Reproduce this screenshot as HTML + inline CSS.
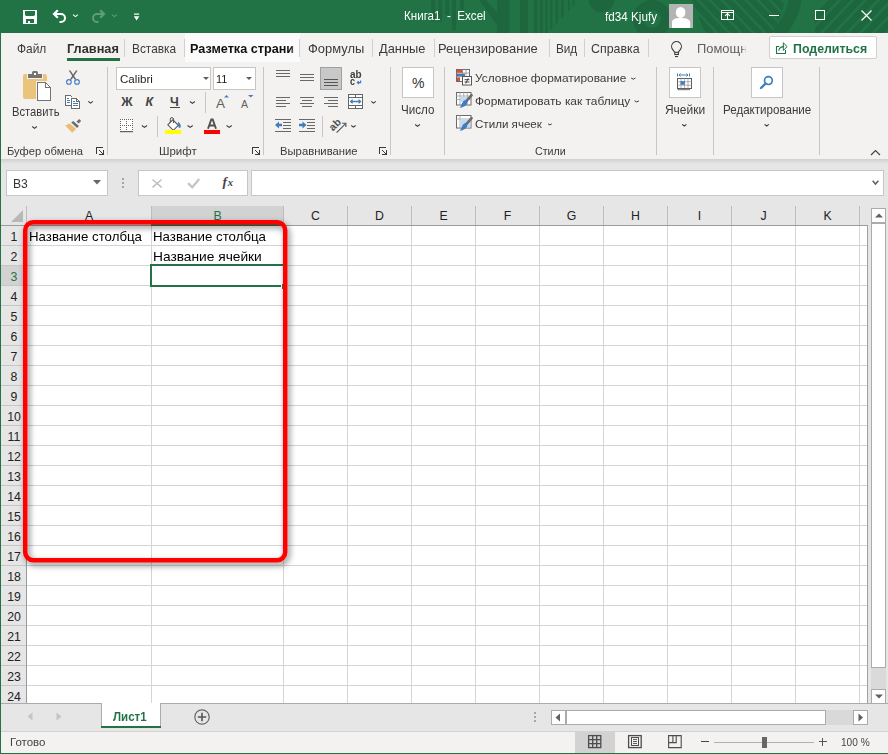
<!DOCTYPE html>
<html><head><meta charset="utf-8"><style>
html,body{margin:0;padding:0}
body{width:888px;height:754px;overflow:hidden;position:relative;font-family:"Liberation Sans",sans-serif;background:#f3f2f1}
.t{position:absolute;white-space:nowrap}
svg{display:block}
</style></head><body>
<div style="position:absolute;left:0px;top:0px;width:888px;height:33px;background:#217346"></div>
<svg style="position:absolute;left:420px;top:0px;" width="468" height="33" viewBox="0 0 468 33">
<defs>
<clipPath id="c1"><path d="M99 0H159L127.6 33H99z"/></clipPath>
<clipPath id="c2"><path d="M272 0H365C362 12 358 24 352 33H285z"/></clipPath>
<clipPath id="c3"><path d="M395 0H468V33H395z"/></clipPath>
</defs>
<g fill="#1d663e">
<rect x="11.2" y="0" width="3.9" height="21.4"/>
<rect x="18.5" y="0" width="3.4" height="21.4"/>
<rect x="25.3" y="0" width="3.9" height="14.6"/>
<rect x="32" y="0" width="4" height="30.4"/>
<rect x="40" y="0" width="3.9" height="10"/>
<path d="M59 0H66L77 13V0H89.5V33H77V25z"/>
<g clip-path="url(#c1)"><rect x="100" y="0" width="8" height="33"/><rect x="114" y="0" width="3.4" height="33"/><rect x="119.7" y="0" width="3.3" height="33"/><rect x="125.3" y="0" width="2.3" height="33"/><rect x="130" y="0" width="2.5" height="33"/><rect x="135.5" y="0" width="2.9" height="33"/><rect x="141" y="0" width="2.8" height="33"/><rect x="147.8" y="0" width="2.2" height="33"/><rect x="152.3" y="0" width="2.3" height="33"/></g>
<circle cx="181.5" cy="-1" r="13"/>
</g>
<circle cx="232" cy="19" r="14" fill="none" stroke="#1d663e" stroke-width="10"/>
<g stroke="#1d663e" stroke-width="6" clip-path="url(#c2)"><path d="M222 -2 L257 35"/><path d="M234 -2 L269 35"/><path d="M246 -2 L281 35"/><path d="M258 -2 L293 35"/><path d="M270 -2 L305 35"/><path d="M282 -2 L317 35"/><path d="M294 -2 L329 35"/><path d="M306 -2 L341 35"/><path d="M318 -2 L353 35"/><path d="M330 -2 L365 35"/><path d="M342 -2 L377 35"/><path d="M354 -2 L389 35"/></g>
<path d="M358 35 C368 22 375 10 375 -2" fill="none" stroke="#1d663e" stroke-width="13"/>
<g stroke="#1d663e" stroke-width="6.5" clip-path="url(#c3)"><path d="M380 35 L415 -2"/><path d="M393 35 L428 -2"/><path d="M406 35 L441 -2"/><path d="M419 35 L454 -2"/><path d="M432 35 L467 -2"/><path d="M445 35 L480 -2"/><path d="M458 35 L493 -2"/><path d="M471 35 L506 -2"/></g>
</svg>
<svg style="position:absolute;left:0;top:0" width="888" height="754"><g fill="#fff"><rect x="23" y="10" width="14" height="1"/><rect x="23" y="11" width="2" height="12"/><rect x="35" y="11" width="2" height="12"/><rect x="23" y="16" width="14" height="3"/><rect x="25" y="19" width="1" height="4"/><rect x="34" y="19" width="1" height="4"/><rect x="28" y="21" width="2" height="2"/><rect x="23" y="23" width="14" height="1"/><rect x="25" y="15" width="1" height="1" opacity="0.6"/><rect x="34" y="15" width="1" height="1" opacity="0.6"/></g></svg>
<svg style="position:absolute;left:0;top:0" width="888" height="754"><path d="M54 14H61A4 4 0 0 1 61 22H59.5" fill="none" stroke="#fff" stroke-width="2"/><path d="M57.8 10.2L54 14L57.8 17.8" fill="none" stroke="#fff" stroke-width="2.2"/></svg>
<svg style="position:absolute;left:0;top:0" width="888" height="754"><path d="M73 14.6L75.45 16.6L77.9 14.6" fill="none" stroke="#fff" stroke-width="1.1"/></svg>
<svg style="position:absolute;left:0;top:0" width="888" height="754"><path d="M104 14H97A4 4 0 0 0 97 22H98.5" fill="none" stroke="#5f9c79" stroke-width="2"/><path d="M100.2 10.2L104 14L100.2 17.8" fill="none" stroke="#5f9c79" stroke-width="2.2"/></svg>
<svg style="position:absolute;left:0;top:0" width="888" height="754"><path d="M111.9 14.6L114.4 16.6L116.9 14.6" fill="none" stroke="#5f9c79" stroke-width="1.1"/></svg>
<svg style="position:absolute;left:0;top:0" width="888" height="754"><rect x="134" y="13.5" width="5.2" height="1.2" fill="#fff"/><path d="M133.8 16.3h5.6l-2.8 4.2z" fill="#fff"/></svg>
<div class="t" style="left:403.60px;top:9.76px;font-size:12.1px;line-height:12.1px;color:#fff;font-weight:400;transform:scaleX(0.9594);transform-origin:0 0;">Книга1&nbsp; -&nbsp; Excel</div>
<div class="t" style="left:605.10px;top:11.36px;font-size:12.1px;line-height:12.1px;color:#fff;font-weight:400;transform:scaleX(0.9664);transform-origin:0 0;">fd34 Kjufy</div>
<div style="position:absolute;left:669px;top:4px;width:24px;height:24px;background:#b4b4b4"></div>
<svg style="position:absolute;left:0;top:0" width="888" height="754"><ellipse cx="680.6" cy="12.4" rx="4.8" ry="5.5" fill="#fff"/><path d="M672 28V22.3C672 19.3 675 17.9 680.6 17.9S690.2 19.3 690.2 22.3V28z" fill="#fff"/></svg>
<svg style="position:absolute;left:0;top:0" width="888" height="754"><g fill="#fff"><rect x="721" y="10" width="13" height="1"/><rect x="721" y="19" width="13" height="1"/><rect x="721" y="10" width="1" height="10"/><rect x="733" y="10" width="1" height="10"/><rect x="721" y="12" width="13" height="1"/><rect x="727" y="13" width="1" height="6"/></g><path d="M725.1 15.9L727.5 13.5L729.9 15.9" fill="none" stroke="#fff" stroke-width="1.1"/></svg>
<div style="position:absolute;left:769px;top:15px;width:10px;height:1px;background:#fff"></div>
<div style="position:absolute;left:815px;top:10px;width:10px;height:10px;border:1px solid #fff;box-sizing:border-box"></div>
<svg style="position:absolute;left:861px;top:10px;" width="11" height="11" viewBox="0 0 11 11"><path d="M0.5 0.5l10 10M10.5 0.5l-10 10" stroke="#fff" stroke-width="1.2"/></svg>
<div style="position:absolute;left:0px;top:33px;width:888px;height:130px;background:#f3f2f1"></div>
<div style="position:absolute;left:185px;top:33px;width:115px;height:29px;background:#fbfbfb"></div>
<div class="t" style="left:16.70px;top:41.83px;font-size:13.2px;line-height:13.2px;color:#3b3a39;font-weight:400;transform:scaleX(0.9046);transform-origin:0 0;">Файл</div>
<div class="t" style="left:67.40px;top:41.83px;font-size:13.2px;line-height:13.2px;color:#323130;font-weight:700;transform:scaleX(0.9672);transform-origin:0 0;">Главная</div>
<div style="position:absolute;left:67px;top:58px;width:53px;height:3px;background:#217346"></div>
<div class="t" style="left:131.60px;top:41.83px;font-size:13.2px;line-height:13.2px;color:#3b3a39;font-weight:400;transform:scaleX(0.8997);transform-origin:0 0;">Вставка</div>
<div class="t" style="left:189.50px;top:41.83px;font-size:13.2px;line-height:13.2px;color:#111;font-weight:700;transform:scaleX(0.9588);transform-origin:0 0;">Разметка страни</div>
<div style="position:absolute;left:291px;top:40px;width:6px;height:16px;background:linear-gradient(90deg,rgba(251,251,251,0),rgba(251,251,251,0.85) 80%)"></div>
<div class="t" style="left:307.70px;top:41.83px;font-size:13.2px;line-height:13.2px;color:#3b3a39;font-weight:400;transform:scaleX(0.9805);transform-origin:0 0;">Формулы</div>
<div class="t" style="left:379.30px;top:41.83px;font-size:13.2px;line-height:13.2px;color:#3b3a39;font-weight:400;transform:scaleX(0.9723);transform-origin:0 0;">Данные</div>
<div class="t" style="left:438.02px;top:41.83px;font-size:13.2px;line-height:13.2px;color:#3b3a39;font-weight:400;transform:scaleX(0.9802);transform-origin:0 0;">Рецензирование</div>
<div class="t" style="left:555.51px;top:41.83px;font-size:13.2px;line-height:13.2px;color:#3b3a39;font-weight:400;transform:scaleX(0.8894);transform-origin:0 0;">Вид</div>
<div class="t" style="left:591.00px;top:41.83px;font-size:13.2px;line-height:13.2px;color:#3b3a39;font-weight:400;transform:scaleX(0.9409);transform-origin:0 0;">Справка</div>
<div style="position:absolute;left:124px;top:39px;width:1px;height:18px;background:#d2d0ce"></div>
<div style="position:absolute;left:184px;top:39px;width:1px;height:18px;background:#d2d0ce"></div>
<div style="position:absolute;left:299px;top:39px;width:1px;height:18px;background:#d2d0ce"></div>
<div style="position:absolute;left:372px;top:39px;width:1px;height:18px;background:#d2d0ce"></div>
<div style="position:absolute;left:434px;top:39px;width:1px;height:18px;background:#d2d0ce"></div>
<div style="position:absolute;left:549px;top:39px;width:1px;height:18px;background:#d2d0ce"></div>
<div style="position:absolute;left:584px;top:39px;width:1px;height:18px;background:#d2d0ce"></div>
<div style="position:absolute;left:648px;top:39px;width:1px;height:18px;background:#d2d0ce"></div>
<svg style="position:absolute;left:0;top:0" width="888" height="754"><path d="M674.3 52.2V51.8L672.7 49.6A4.9 4.9 0 1 1 680.3 49.6L678.7 51.8V52.2" fill="none" stroke="#3c3c3c" stroke-width="1.1"/><rect x="674.8" y="52.3" width="3.6" height="2.2" fill="none" stroke="#3c3c3c" stroke-width="1.1"/><rect x="675" y="56" width="3" height="1.1" fill="#3c3c3c"/></svg>
<div class="t" style="left:697.02px;top:41.83px;font-size:13.2px;line-height:13.2px;color:#605e5c;font-weight:400;transform:scaleX(0.9788);transform-origin:0 0;">Помощн</div>
<div style="position:absolute;left:741px;top:40px;width:8px;height:16px;background:linear-gradient(90deg,rgba(243,242,241,0),#f3f2f1 70%)"></div>
<div style="position:absolute;left:769px;top:36px;width:108px;height:23px;background:#fff;border:1px solid #d2d0ce;border-radius:2px;box-sizing:border-box"></div>
<svg style="position:absolute;left:0;top:0" width="888" height="754"><path d="M779.2 46.5H776.5V53.5H785.5V50" fill="none" stroke="#217346" stroke-width="1.1"/><path d="M778.8 50.8C779 47.8 781 46.6 784.2 46.6" fill="none" stroke="#217346" stroke-width="1.1"/><path d="M783.3 42.8L787.2 46.6L783.3 50.4z" fill="none" stroke="#217346" stroke-width="1.0" stroke-linejoin="round"/></svg>
<div class="t" style="left:793.00px;top:41.91px;font-size:13.1px;line-height:13.1px;color:#217346;font-weight:700;transform:scaleX(0.9443);transform-origin:0 0;">Поделиться</div>
<div style="position:absolute;left:107px;top:67px;width:1px;height:88px;background:#c8c6c4"></div>
<div style="position:absolute;left:263px;top:67px;width:1px;height:88px;background:#c8c6c4"></div>
<div style="position:absolute;left:390px;top:67px;width:1px;height:88px;background:#c8c6c4"></div>
<div style="position:absolute;left:444px;top:67px;width:1px;height:88px;background:#c8c6c4"></div>
<div style="position:absolute;left:656px;top:67px;width:1px;height:88px;background:#c8c6c4"></div>
<div style="position:absolute;left:713px;top:67px;width:1px;height:88px;background:#c8c6c4"></div>
<div style="position:absolute;left:819px;top:67px;width:1px;height:88px;background:#c8c6c4"></div>
<div class="t" style="left:7.30px;top:146.03px;font-size:10.6px;line-height:10.6px;color:#3b3a39;font-weight:400;transform:scaleX(1.0570);transform-origin:0 0;">Буфер обмена</div>
<div class="t" style="left:158.80px;top:146.03px;font-size:10.6px;line-height:10.6px;color:#3b3a39;font-weight:400;transform:scaleX(1.0799);transform-origin:0 0;">Шрифт</div>
<div class="t" style="left:279.50px;top:146.03px;font-size:10.6px;line-height:10.6px;color:#3b3a39;font-weight:400;transform:scaleX(1.0640);transform-origin:0 0;">Выравнивание</div>
<div class="t" style="left:534.50px;top:146.03px;font-size:10.6px;line-height:10.6px;color:#3b3a39;font-weight:400;transform:scaleX(1.0065);transform-origin:0 0;">Стили</div>
<svg style="position:absolute;left:0;top:0" width="888" height="754"><g fill="#3a3a3a"><rect x="96" y="147" width="7" height="1"/><rect x="96" y="147" width="1" height="7"/><rect x="99" y="150" width="1" height="1"/><rect x="100" y="151" width="1" height="1"/><rect x="101" y="152" width="1" height="1"/><rect x="102" y="153" width="1" height="1"/><rect x="103" y="154" width="1" height="1"/><rect x="103" y="150" width="1" height="5"/><rect x="99" y="154" width="5" height="1"/></g></svg>
<svg style="position:absolute;left:0;top:0" width="888" height="754"><g fill="#3a3a3a"><rect x="252" y="147" width="7" height="1"/><rect x="252" y="147" width="1" height="7"/><rect x="255" y="150" width="1" height="1"/><rect x="256" y="151" width="1" height="1"/><rect x="257" y="152" width="1" height="1"/><rect x="258" y="153" width="1" height="1"/><rect x="259" y="154" width="1" height="1"/><rect x="259" y="150" width="1" height="5"/><rect x="255" y="154" width="5" height="1"/></g></svg>
<svg style="position:absolute;left:0;top:0" width="888" height="754"><g fill="#3a3a3a"><rect x="379" y="147" width="7" height="1"/><rect x="379" y="147" width="1" height="7"/><rect x="382" y="150" width="1" height="1"/><rect x="383" y="151" width="1" height="1"/><rect x="384" y="152" width="1" height="1"/><rect x="385" y="153" width="1" height="1"/><rect x="386" y="154" width="1" height="1"/><rect x="386" y="150" width="1" height="5"/><rect x="382" y="154" width="5" height="1"/></g></svg>
<svg style="position:absolute;left:870px;top:149px;" width="11" height="7" viewBox="0 0 11 7"><path d="M1 6l4.5-4.5L10 6" fill="none" stroke="#444" stroke-width="1.2"/></svg>
<svg style="position:absolute;left:0;top:0" width="888" height="754">
<rect x="23" y="74" width="24" height="25" rx="2" fill="#ebc47c"/>
<rect x="27" y="74" width="16" height="5" fill="#f3f2f1"/>
<rect x="28" y="74" width="14" height="4" fill="#737373"/>
<rect x="32" y="71" width="6" height="4" rx="1.5" fill="#737373"/>
<rect x="34" y="73" width="2" height="2" fill="#fff"/>
<rect x="36" y="81" width="16" height="21" fill="#f3f2f1"/>
<path d="M37 82H45L51 88V101H37z" fill="#fff"/>
<g fill="#737373">
<rect x="37" y="82" width="9" height="1"/><rect x="37" y="82" width="1" height="19"/><rect x="37" y="100" width="14" height="1"/><rect x="50" y="87" width="1" height="14"/>
<rect x="45" y="82" width="1" height="6"/><rect x="45" y="87" width="6" height="1"/>
</g>
<path d="M45.5 82.5L50.5 87.5" stroke="#737373" stroke-width="1"/>
</svg>
<div class="t" style="left:11.80px;top:105.76px;font-size:12.1px;line-height:12.1px;color:#3b3a39;font-weight:400;transform:scaleX(0.9262);transform-origin:0 0;">Вставить</div>
<svg style="position:absolute;left:0;top:0" width="888" height="754"><path d="M32.25 126.55L34.55 128.35L36.85 126.55" fill="none" stroke="#3b3a39" stroke-width="1.1"/></svg>
<svg style="position:absolute;left:0;top:0" width="888" height="754">
<path d="M68.7 70.6L70.4 70.6L76.3 79.2L74.8 79.8z" fill="#666"/><path d="M77.6 70.6L75.9 70.6L70 79.2L71.5 79.8z" fill="#666"/>
<circle cx="68.9" cy="81.9" r="2.3" fill="none" stroke="#3f7cc0" stroke-width="1.1"/>
<circle cx="77" cy="81.9" r="2.3" fill="none" stroke="#3f7cc0" stroke-width="1.1"/>
<rect x="65" y="95" width="6" height="11" fill="#fff"/><rect x="71" y="98" width="8" height="11" fill="#fff"/>
<g fill="#6b6b6b">
<rect x="65" y="95" width="6" height="1"/><rect x="65" y="95" width="1" height="11"/><rect x="65" y="105" width="6" height="1"/>
<rect x="71" y="96" width="1" height="1"/>
<rect x="71" y="98" width="6" height="1"/><rect x="71" y="98" width="1" height="11"/><rect x="71" y="108" width="9" height="1"/><rect x="79" y="101" width="1" height="8"/>
<rect x="76" y="98" width="1" height="4"/><rect x="76" y="101" width="4" height="1"/>
</g>
<path d="M76.5 98.5L79.5 101.5" stroke="#6b6b6b" stroke-width="1"/>
<g fill="#3f7cc0">
<rect x="67" y="98" width="2" height="1"/><rect x="67" y="100" width="3" height="1"/><rect x="67" y="102" width="3" height="1"/>
<rect x="73" y="101" width="2" height="1"/><rect x="73" y="103" width="5" height="1"/><rect x="73" y="105" width="5" height="1"/>
</g>
<path d="M79.2 119L81.2 120.9L78.5 123.6L76.5 121.6z" fill="#6e6e6e"/>
<path d="M73.2 121L79 126.1L77 127.9L71.2 122.6z" fill="#6e6e6e"/>
<path d="M65.2 125.4L69.8 123.5L76.2 128.9L72.2 132.8z" fill="#e8bf77"/>
</svg>
<svg style="position:absolute;left:0;top:0" width="888" height="754"><path d="M88.25 101.35L90.55000000000001 103.15L92.85000000000001 101.35" fill="none" stroke="#3b3a39" stroke-width="1.1"/></svg>
<div style="position:absolute;left:116px;top:67px;width:95px;height:23px;background:#fff;border:1px solid #c8c6c4;box-sizing:border-box"></div>
<div class="t" style="left:119.70px;top:74.27px;font-size:11.5px;line-height:11.5px;color:#201f1e;font-weight:400;transform:scaleX(1.0082);transform-origin:0 0;">Calibri</div>
<svg style="position:absolute;left:202.5px;top:77px;" width="7" height="4" viewBox="0 0 7 4"><path d="M0 0h6L3 3z" fill="#605e5c"/></svg>
<div style="position:absolute;left:213px;top:67px;width:43px;height:23px;background:#fff;border:1px solid #c8c6c4;box-sizing:border-box"></div>
<div class="t" style="left:216.00px;top:74.27px;font-size:11.5px;line-height:11.5px;color:#201f1e;font-weight:400;transform:scaleX(0.9530);transform-origin:0 0;">11</div>
<svg style="position:absolute;left:245.5px;top:77px;" width="7" height="4" viewBox="0 0 7 4"><path d="M0 0h6L3 3z" fill="#605e5c"/></svg>
<div class="t" style="left:121.20px;top:95.92px;font-size:12.5px;line-height:12.5px;color:#444;font-weight:700;">Ж</div>
<div class="t" style="left:145.50px;top:95.92px;font-size:12.5px;line-height:12.5px;color:#444;font-weight:700;font-style:italic">К</div>
<div class="t" style="left:170.00px;top:95.92px;font-size:12.5px;line-height:12.5px;color:#444;font-weight:700;">Ч</div>
<div style="position:absolute;left:170px;top:107px;width:10px;height:1px;background:#444"></div>
<svg style="position:absolute;left:0;top:0" width="888" height="754"><path d="M189.95000000000002 101.55L192.4 103.35000000000001L194.85 101.55" fill="none" stroke="#3b3a39" stroke-width="1.1"/></svg>
<div style="position:absolute;left:205px;top:92px;width:1px;height:21px;background:#c8c6c4"></div>
<div class="t" style="left:216.00px;top:97.37px;font-size:13.5px;line-height:13.5px;color:#605e5c;font-weight:400;">A</div>
<svg style="position:absolute;left:224px;top:95px;" width="5" height="3" viewBox="0 0 5 3"><path d="M0 2.5L2.5 0 5 2.5z" fill="#4a7fbf"/></svg>
<div class="t" style="left:241.00px;top:98.91px;font-size:10.5px;line-height:10.5px;color:#605e5c;font-weight:400;">A</div>
<svg style="position:absolute;left:248px;top:95px;" width="6" height="3" viewBox="0 0 6 3"><path d="M0 0h5.5L2.75 2.5z" fill="#4a7fbf"/></svg>
<svg style="position:absolute;left:0;top:0" width="888" height="754"><rect x="120" y="119" width="13" height="13" fill="#fff"/><g fill="#606060"><rect x="120" y="119" width="1" height="1"/><rect x="122" y="119" width="1" height="1"/><rect x="124" y="119" width="1" height="1"/><rect x="126" y="119" width="1" height="1"/><rect x="128" y="119" width="1" height="1"/><rect x="130" y="119" width="1" height="1"/><rect x="132" y="119" width="1" height="1"/><rect x="120" y="121" width="1" height="1"/><rect x="126" y="121" width="1" height="1"/><rect x="132" y="121" width="1" height="1"/><rect x="120" y="123" width="1" height="1"/><rect x="126" y="123" width="1" height="1"/><rect x="132" y="123" width="1" height="1"/><rect x="120" y="125" width="1" height="1"/><rect x="122" y="125" width="1" height="1"/><rect x="124" y="125" width="1" height="1"/><rect x="126" y="125" width="1" height="1"/><rect x="128" y="125" width="1" height="1"/><rect x="130" y="125" width="1" height="1"/><rect x="132" y="125" width="1" height="1"/><rect x="120" y="127" width="1" height="1"/><rect x="126" y="127" width="1" height="1"/><rect x="132" y="127" width="1" height="1"/><rect x="120" y="129" width="1" height="1"/><rect x="126" y="129" width="1" height="1"/><rect x="132" y="129" width="1" height="1"/></g><rect x="120" y="131" width="13" height="1.2" fill="#606060"/></svg>
<svg style="position:absolute;left:0;top:0" width="888" height="754"><path d="M141.85000000000002 125.55L144.45 127.35000000000001L147.04999999999998 125.55" fill="none" stroke="#3b3a39" stroke-width="1.1"/></svg>
<div style="position:absolute;left:157px;top:116px;width:1px;height:21px;background:#c8c6c4"></div>
<svg style="position:absolute;left:0;top:0" width="888" height="754">
<path d="M167.8 124.8L172.8 119.8L178.3 125.3L173.3 130.3z" fill="#fff" stroke="#555" stroke-width="1.1"/>
<path d="M170.3 122.3V119.2a1.6 1.6 0 0 1 3.2 0V123" fill="none" stroke="#555" stroke-width="1"/>
<path d="M177.8 121.8c1.8 1 3 2.6 3 4.4 0 1-.6 1.6-1.3 1.6s-1.2-.6-1.2-1.5z" fill="#3f7cc0"/>
<rect x="165" y="130" width="16.2" height="4" fill="#ffff00"/>
</svg>
<svg style="position:absolute;left:0;top:0" width="888" height="754"><path d="M187.55 125.55L190.15 127.35000000000001L192.75 125.55" fill="none" stroke="#3b3a39" stroke-width="1.1"/></svg>
<svg style="position:absolute;left:204px;top:118px;" width="16" height="17" viewBox="0 0 16 17"><path d="M4 10.8L7.3 1.5h1.4L12 10.8M5.5 7.5h5" fill="none" stroke="#505050" stroke-width="1.9"/><rect x="0" y="12" width="16" height="4" fill="#ff0000"/></svg>
<svg style="position:absolute;left:0;top:0" width="888" height="754"><path d="M226.55 125.55L229.15 127.35000000000001L231.75 125.55" fill="none" stroke="#3b3a39" stroke-width="1.1"/></svg>
<div style="position:absolute;left:276px;top:70px;width:14px;height:1px;background:#686868"></div>
<div style="position:absolute;left:276px;top:73px;width:14px;height:1px;background:#686868"></div>
<div style="position:absolute;left:276px;top:76px;width:14px;height:1px;background:#686868"></div>
<div style="position:absolute;left:300px;top:74px;width:14px;height:1px;background:#686868"></div>
<div style="position:absolute;left:300px;top:77px;width:14px;height:1px;background:#686868"></div>
<div style="position:absolute;left:300px;top:80px;width:14px;height:1px;background:#686868"></div>
<div style="position:absolute;left:320px;top:67px;width:22px;height:23px;background:#c8c8c8;border:1px solid #a0a0a0;box-sizing:border-box"></div>
<div style="position:absolute;left:324px;top:79px;width:14px;height:1px;background:#555"></div>
<div style="position:absolute;left:324px;top:82px;width:14px;height:1px;background:#555"></div>
<div style="position:absolute;left:324px;top:85px;width:14px;height:1px;background:#555"></div>
<div style="position:absolute;left:276px;top:97px;width:14px;height:1px;background:#686868"></div>
<div style="position:absolute;left:300px;top:97px;width:14px;height:1px;background:#686868"></div>
<div style="position:absolute;left:324px;top:97px;width:14px;height:1px;background:#686868"></div>
<div style="position:absolute;left:276px;top:100px;width:10px;height:1px;background:#686868"></div>
<div style="position:absolute;left:302px;top:100px;width:10px;height:1px;background:#686868"></div>
<div style="position:absolute;left:328px;top:100px;width:10px;height:1px;background:#686868"></div>
<div style="position:absolute;left:276px;top:103px;width:14px;height:1px;background:#686868"></div>
<div style="position:absolute;left:300px;top:103px;width:14px;height:1px;background:#686868"></div>
<div style="position:absolute;left:324px;top:103px;width:14px;height:1px;background:#686868"></div>
<div style="position:absolute;left:276px;top:106px;width:10px;height:1px;background:#686868"></div>
<div style="position:absolute;left:302px;top:106px;width:10px;height:1px;background:#686868"></div>
<div style="position:absolute;left:328px;top:106px;width:10px;height:1px;background:#686868"></div>
<div class="t" style="left:349.80px;top:68.69px;font-size:11px;line-height:11px;color:#404040;font-weight:700;transform:scaleX(0.9072);transform-origin:0 0;">ab</div>
<div class="t" style="left:350.10px;top:75.69px;font-size:11px;line-height:11px;color:#404040;font-weight:700;transform:scaleX(0.8167);transform-origin:0 0;">c</div>
<svg style="position:absolute;left:0;top:0" width="888" height="754"><path d="M360.6 80.4V82.6H357.6M358.9 81.1L357.3 82.6L358.9 84.1" fill="none" stroke="#3f7cc0" stroke-width="1.2"/></svg>
<svg style="position:absolute;left:0;top:0" width="888" height="754"><rect x="348" y="94" width="15" height="15" fill="#fff"/><g fill="#666"><rect x="348" y="94" width="15" height="1"/><rect x="348" y="108" width="15" height="1"/><rect x="348" y="94" width="1" height="15"/><rect x="362" y="94" width="1" height="15"/><rect x="348" y="97" width="15" height="1"/><rect x="348" y="105" width="15" height="1"/><rect x="355" y="94" width="1" height="4"/><rect x="355" y="105" width="1" height="4"/></g><path d="M351.5 101.5H359.7M352.6 99.6L350.6 101.5L352.6 103.4M358.6 99.6L360.6 101.5L358.6 103.4" fill="none" stroke="#3f7cc0" stroke-width="1.3"/></svg>
<svg style="position:absolute;left:0;top:0" width="888" height="754"><path d="M371.25 101.35L373.5 103.15L375.75 101.35" fill="none" stroke="#3b3a39" stroke-width="1.1"/></svg>
<div style="position:absolute;left:275px;top:119px;width:16px;height:1px;background:#686868"></div>
<div style="position:absolute;left:275px;top:131px;width:16px;height:1px;background:#686868"></div>
<div style="position:absolute;left:283px;top:122px;width:8px;height:1px;background:#686868"></div>
<div style="position:absolute;left:283px;top:125px;width:8px;height:1px;background:#686868"></div>
<div style="position:absolute;left:283px;top:128px;width:8px;height:1px;background:#686868"></div>
<div style="position:absolute;left:299px;top:119px;width:16px;height:1px;background:#686868"></div>
<div style="position:absolute;left:299px;top:131px;width:16px;height:1px;background:#686868"></div>
<div style="position:absolute;left:307px;top:122px;width:8px;height:1px;background:#686868"></div>
<div style="position:absolute;left:307px;top:125px;width:8px;height:1px;background:#686868"></div>
<div style="position:absolute;left:307px;top:128px;width:8px;height:1px;background:#686868"></div>
<svg style="position:absolute;left:275px;top:121px;" width="8" height="8" viewBox="0 0 8 8"><path d="M0 4L4 0.5V2.8H7V5.2H4V7.5z" fill="#3f7cc0"/></svg>
<svg style="position:absolute;left:299px;top:121px;" width="8" height="8" viewBox="0 0 8 8"><path d="M7.5 4L3.5 0.5V2.8H0V5.2H3.5V7.5z" fill="#3f7cc0"/></svg>
<div style="position:absolute;left:322px;top:116px;width:1px;height:21px;background:#c8c6c4"></div>
<svg style="position:absolute;left:0;top:0" width="888" height="754"><text x="333" y="131.5" font-size="10.5" font-weight="700" fill="#505050" font-family="Liberation Sans" transform="rotate(-45 333 131.5)">ab</text><path d="M336.6 132.6L345.4 123.8" stroke="#505050" stroke-width="1.1"/><path d="M342.2 123.3H345.9V127" fill="none" stroke="#505050" stroke-width="1.1"/></svg>
<svg style="position:absolute;left:0;top:0" width="888" height="754"><path d="M351.25 125.45L353.45 127.15L355.65 125.45" fill="none" stroke="#3b3a39" stroke-width="1.1"/></svg>
<div style="position:absolute;left:402px;top:67px;width:32px;height:31px;background:#fff;border:1px solid #c8c6c4;box-sizing:border-box"></div>
<div class="t" style="left:412.00px;top:76.15px;font-size:14px;line-height:14px;color:#333;font-weight:400;">%</div>
<div class="t" style="left:401.00px;top:103.76px;font-size:12.1px;line-height:12.1px;color:#3b3a39;font-weight:400;transform:scaleX(0.9585);transform-origin:0 0;">Число</div>
<svg style="position:absolute;left:0;top:0" width="888" height="754"><path d="M415.15000000000003 124.55L417.5 126.35000000000001L419.84999999999997 124.55" fill="none" stroke="#3b3a39" stroke-width="1.1"/></svg>
<svg style="position:absolute;left:0;top:0" width="888" height="754">
<rect x="456.5" y="69.5" width="13" height="12" fill="#fff" stroke="#6b6b6b" stroke-width="1"/>
<path d="M462.5 69.5v12M466 69.5v6M456.5 73h13M456.5 76.7h6" stroke="#9a9a9a" stroke-width="0.9" fill="none"/>
<rect x="457" y="70" width="5.6" height="2.8" fill="#e0502a"/>
<rect x="457" y="73.7" width="8" height="2.6" fill="#3f7cc0"/>
<rect x="457" y="77.4" width="3" height="3.6" fill="#e0502a"/>
<rect x="462.5" y="76.5" width="9" height="8.5" fill="#fff" stroke="#555" stroke-width="1"/>
<path d="M464.5 79.7h5M464.5 82h5M468.3 78.2l-2.6 5.3" stroke="#333" stroke-width="0.9"/>
</svg>
<div class="t" style="left:475.30px;top:73.21px;font-size:11.8px;line-height:11.8px;color:#3b3a39;font-weight:400;transform:scaleX(1.0079);transform-origin:0 0;">Условное форматирование</div>
<svg style="position:absolute;left:0;top:0" width="888" height="754"><path d="M631.15 78.05L633.3 79.15L635.45 78.05" fill="none" stroke="#3b3a39" stroke-width="1.0"/></svg>
<svg style="position:absolute;left:0;top:0" width="888" height="754">
<rect x="456.5" y="92.5" width="14.5" height="12.5" fill="#fff" stroke="#6b6b6b" stroke-width="1"/>
<path d="M456.5 96h14.5M456.5 99.5h14.5M460 92.5v12.5M463.7 92.5v12.5M467.3 92.5v12.5" stroke="#a8a8a8" stroke-width="0.9"/>
<rect x="460.5" y="96.5" width="6.5" height="5.5" fill="#c5d9ee"/>
<path d="M471.6 95.2L466.8 100.6" stroke="#6b6b6b" stroke-width="2.6" stroke-linecap="round"/>
<path d="M466.7 100.3c-1.6-.6-3.3.3-4.2 2.2-.7 1.5-1.6 3.5-2.6 5.5 2-.4 4.2-1.2 5.7-2.4 1.6-1.3 2.3-3.5 1.1-5.3z" fill="#3f7cc0"/>
</svg>
<div class="t" style="left:475.30px;top:96.01px;font-size:11.8px;line-height:11.8px;color:#3b3a39;font-weight:400;transform:scaleX(1.0112);transform-origin:0 0;">Форматировать как таблицу</div>
<svg style="position:absolute;left:0;top:0" width="888" height="754"><path d="M634.55 100.85L636.75 101.95L638.95 100.85" fill="none" stroke="#3b3a39" stroke-width="1.0"/></svg>
<svg style="position:absolute;left:0;top:0" width="888" height="754">
<rect x="456.5" y="115.5" width="14.5" height="12.5" fill="#fff" stroke="#6b6b6b" stroke-width="1"/>
<path d="M456.5 119h14.5M460 115.5v12.5" stroke="#a8a8a8" stroke-width="0.9"/>
<rect x="460.5" y="119.5" width="10" height="8" fill="#c5d9ee"/>
<path d="M471.6 118.2L466.8 123.6" stroke="#6b6b6b" stroke-width="2.6" stroke-linecap="round"/>
<path d="M466.7 123.3c-1.6-.6-3.3.3-4.2 2.2-.7 1.5-1.6 3.5-2.6 5.5 2-.4 4.2-1.2 5.7-2.4 1.6-1.3 2.3-3.5 1.1-5.3z" fill="#3f7cc0"/>
</svg>
<div class="t" style="left:475.30px;top:119.01px;font-size:11.8px;line-height:11.8px;color:#3b3a39;font-weight:400;transform:scaleX(0.9823);transform-origin:0 0;">Стили ячеек</div>
<svg style="position:absolute;left:0;top:0" width="888" height="754"><path d="M548.05 123.85L549.9 124.95L551.75 123.85" fill="none" stroke="#3b3a39" stroke-width="1.0"/></svg>
<div style="position:absolute;left:669px;top:67px;width:32px;height:31px;background:#fff;border:1px solid #c8c6c4;box-sizing:border-box"></div>
<svg style="position:absolute;left:0;top:0" width="888" height="754">
<path d="M677.5 73.5v3M689.5 73.5v3M679 75h9M680.5 73.5l-1.5 1.5 1.5 1.5M686.5 73.5l1.5 1.5-1.5 1.5" stroke="#3f7cc0" stroke-width="1" fill="none"/>
<rect x="677.5" y="78.5" width="14" height="10" fill="#fff" stroke="#5a5a5a" stroke-width="1"/>
<path d="M677.5 81.7h14M677.5 85.2h14M681 78.5v10M684.6 78.5v10M688 78.5v10" stroke="#a0a0a0" stroke-width="0.8"/>
<rect x="680.5" y="81.2" width="4.3" height="3.6" fill="#3f7cc0"/>
<path d="M678 88.5v1.2h5.5v-1.2M684 88.5v1.2h5.5v-1.2" stroke="#5a5a5a" stroke-width="0.9" fill="none"/>
</svg>
<div class="t" style="left:665.20px;top:103.76px;font-size:12.1px;line-height:12.1px;color:#3b3a39;font-weight:400;transform:scaleX(0.9873);transform-origin:0 0;">Ячейки</div>
<svg style="position:absolute;left:0;top:0" width="888" height="754"><path d="M682.15 124.35L684.3 126.05L686.45 124.35" fill="none" stroke="#3b3a39" stroke-width="1.1"/></svg>
<div style="position:absolute;left:751px;top:67px;width:32px;height:31px;background:#fff;border:1px solid #c8c6c4;box-sizing:border-box"></div>
<svg style="position:absolute;left:0;top:0" width="888" height="754">
<circle cx="768.4" cy="80.6" r="3.9" fill="none" stroke="#3f7cc0" stroke-width="1.7"/>
<path d="M765.6 83.5L761 88" stroke="#3f7cc0" stroke-width="2.4" stroke-linecap="round"/>
</svg>
<div class="t" style="left:722.50px;top:103.76px;font-size:12.1px;line-height:12.1px;color:#3b3a39;font-weight:400;transform:scaleX(0.9578);transform-origin:0 0;">Редактирование</div>
<svg style="position:absolute;left:0;top:0" width="888" height="754"><path d="M764.55 124.35L766.7 126.05L768.85 124.35" fill="none" stroke="#3b3a39" stroke-width="1.1"/></svg>
<div style="position:absolute;left:1px;top:159px;width:887px;height:37px;background:#e6e6e6"></div>
<div style="position:absolute;left:1px;top:159px;width:887px;height:5px;background:linear-gradient(#d0d0d0,#e6e6e6)"></div>
<div style="position:absolute;left:6px;top:170px;width:102px;height:26px;background:#fff;border:1px solid #c6c6c6;box-sizing:border-box"></div>
<div class="t" style="left:12.52px;top:178.00px;font-size:12.4px;line-height:12.4px;color:#333;font-weight:400;transform:scaleX(0.9815);transform-origin:0 0;">B3</div>
<svg style="position:absolute;left:93px;top:180px;" width="9" height="5" viewBox="0 0 9 5"><path d="M0 0h8L4 4.5z" fill="#666"/></svg>
<div style="position:absolute;left:122px;top:178px;width:2px;height:2px;background:#a6a6a6"></div>
<div style="position:absolute;left:122px;top:182px;width:2px;height:2px;background:#a6a6a6"></div>
<div style="position:absolute;left:122px;top:186px;width:2px;height:2px;background:#a6a6a6"></div>
<div style="position:absolute;left:138px;top:170px;width:110px;height:26px;background:#fff;border:1px solid #c6c6c6;box-sizing:border-box"></div>
<svg style="position:absolute;left:0;top:0" width="888" height="754"><path d="M152.5 179.5L161.6 187.4M161.6 179.5L152.5 187.4" stroke="#bdbdbd" stroke-width="1.4"/></svg>
<svg style="position:absolute;left:0;top:0" width="888" height="754"><path d="M188 183.2L192.3 187.3L199.2 179" fill="none" stroke="#c6c6c6" stroke-width="2.4"/></svg>
<svg style="position:absolute;left:0;top:0" width="888" height="754"><text x="222.5" y="186.3" font-family="Liberation Serif" font-style="italic" font-weight="700" font-size="13.5" fill="#444">f</text><text x="227.8" y="186.3" font-family="Liberation Serif" font-style="italic" font-weight="700" font-size="10.5" fill="#444">x</text></svg>
<div style="position:absolute;left:251px;top:170px;width:633px;height:26px;background:#fff;border:1px solid #c6c6c6;box-sizing:border-box"></div>
<svg style="position:absolute;left:0;top:0" width="888" height="754"><path d="M872.65 180.75L875.5 184.04999999999998L878.35 180.75" fill="none" stroke="#606060" stroke-width="1.5"/></svg>
<div style="position:absolute;left:1px;top:196px;width:867px;height:29px;background:#e6e6e6"></div>
<div style="position:absolute;left:151px;top:206px;width:132px;height:19px;background:#d2d2d2"></div>
<svg style="position:absolute;left:10px;top:209px;" width="14" height="14" viewBox="0 0 14 14"><path d="M13 1V13H1z" fill="#b8b8b8"/></svg>
<div style="position:absolute;left:26px;top:206px;width:1px;height:19px;background:#bdbdbd"></div>
<div style="position:absolute;left:151px;top:206px;width:1px;height:19px;background:#bdbdbd"></div>
<div class="t" style="left:-111.0px;width:400px;text-align:center;top:209.59px;font-size:12.3px;line-height:12.3px;color:#222;font-weight:400;">A</div>
<div style="position:absolute;left:283px;top:206px;width:1px;height:19px;background:#bdbdbd"></div>
<div class="t" style="left:17.5px;width:400px;text-align:center;top:209.59px;font-size:12.3px;line-height:12.3px;color:#217346;font-weight:400;">B</div>
<div style="position:absolute;left:347px;top:206px;width:1px;height:19px;background:#bdbdbd"></div>
<div class="t" style="left:115.5px;width:400px;text-align:center;top:209.59px;font-size:12.3px;line-height:12.3px;color:#222;font-weight:400;">C</div>
<div style="position:absolute;left:411px;top:206px;width:1px;height:19px;background:#bdbdbd"></div>
<div class="t" style="left:179.5px;width:400px;text-align:center;top:209.59px;font-size:12.3px;line-height:12.3px;color:#222;font-weight:400;">D</div>
<div style="position:absolute;left:475px;top:206px;width:1px;height:19px;background:#bdbdbd"></div>
<div class="t" style="left:243.5px;width:400px;text-align:center;top:209.59px;font-size:12.3px;line-height:12.3px;color:#222;font-weight:400;">E</div>
<div style="position:absolute;left:539px;top:206px;width:1px;height:19px;background:#bdbdbd"></div>
<div class="t" style="left:307.5px;width:400px;text-align:center;top:209.59px;font-size:12.3px;line-height:12.3px;color:#222;font-weight:400;">F</div>
<div style="position:absolute;left:603px;top:206px;width:1px;height:19px;background:#bdbdbd"></div>
<div class="t" style="left:371.5px;width:400px;text-align:center;top:209.59px;font-size:12.3px;line-height:12.3px;color:#222;font-weight:400;">G</div>
<div style="position:absolute;left:667px;top:206px;width:1px;height:19px;background:#bdbdbd"></div>
<div class="t" style="left:435.5px;width:400px;text-align:center;top:209.59px;font-size:12.3px;line-height:12.3px;color:#222;font-weight:400;">H</div>
<div style="position:absolute;left:731px;top:206px;width:1px;height:19px;background:#bdbdbd"></div>
<div class="t" style="left:499.5px;width:400px;text-align:center;top:209.59px;font-size:12.3px;line-height:12.3px;color:#222;font-weight:400;">I</div>
<div style="position:absolute;left:795px;top:206px;width:1px;height:19px;background:#bdbdbd"></div>
<div class="t" style="left:563.5px;width:400px;text-align:center;top:209.59px;font-size:12.3px;line-height:12.3px;color:#222;font-weight:400;">J</div>
<div style="position:absolute;left:859px;top:206px;width:1px;height:19px;background:#bdbdbd"></div>
<div class="t" style="left:627.5px;width:400px;text-align:center;top:209.59px;font-size:12.3px;line-height:12.3px;color:#222;font-weight:400;">K</div>
<div style="position:absolute;left:1px;top:225px;width:867px;height:1px;background:#9b9b9b"></div>
<div style="position:absolute;left:151px;top:224px;width:132px;height:2px;background:#217346"></div>
<div style="position:absolute;left:27px;top:226px;width:840px;height:477px;background:#fff"></div>
<div style="position:absolute;left:1px;top:245px;width:866px;height:1px;background:#d4d4d4"></div>
<div style="position:absolute;left:1px;top:265px;width:866px;height:1px;background:#d4d4d4"></div>
<div style="position:absolute;left:1px;top:285px;width:866px;height:1px;background:#d4d4d4"></div>
<div style="position:absolute;left:1px;top:305px;width:866px;height:1px;background:#d4d4d4"></div>
<div style="position:absolute;left:1px;top:325px;width:866px;height:1px;background:#d4d4d4"></div>
<div style="position:absolute;left:1px;top:345px;width:866px;height:1px;background:#d4d4d4"></div>
<div style="position:absolute;left:1px;top:365px;width:866px;height:1px;background:#d4d4d4"></div>
<div style="position:absolute;left:1px;top:385px;width:866px;height:1px;background:#d4d4d4"></div>
<div style="position:absolute;left:1px;top:405px;width:866px;height:1px;background:#d4d4d4"></div>
<div style="position:absolute;left:1px;top:425px;width:866px;height:1px;background:#d4d4d4"></div>
<div style="position:absolute;left:1px;top:445px;width:866px;height:1px;background:#d4d4d4"></div>
<div style="position:absolute;left:1px;top:465px;width:866px;height:1px;background:#d4d4d4"></div>
<div style="position:absolute;left:1px;top:485px;width:866px;height:1px;background:#d4d4d4"></div>
<div style="position:absolute;left:1px;top:505px;width:866px;height:1px;background:#d4d4d4"></div>
<div style="position:absolute;left:1px;top:525px;width:866px;height:1px;background:#d4d4d4"></div>
<div style="position:absolute;left:1px;top:545px;width:866px;height:1px;background:#d4d4d4"></div>
<div style="position:absolute;left:1px;top:565px;width:866px;height:1px;background:#d4d4d4"></div>
<div style="position:absolute;left:1px;top:585px;width:866px;height:1px;background:#d4d4d4"></div>
<div style="position:absolute;left:1px;top:605px;width:866px;height:1px;background:#d4d4d4"></div>
<div style="position:absolute;left:1px;top:625px;width:866px;height:1px;background:#d4d4d4"></div>
<div style="position:absolute;left:1px;top:645px;width:866px;height:1px;background:#d4d4d4"></div>
<div style="position:absolute;left:1px;top:665px;width:866px;height:1px;background:#d4d4d4"></div>
<div style="position:absolute;left:1px;top:685px;width:866px;height:1px;background:#d4d4d4"></div>
<div style="position:absolute;left:151px;top:226px;width:1px;height:477px;background:#d4d4d4"></div>
<div style="position:absolute;left:283px;top:226px;width:1px;height:477px;background:#d4d4d4"></div>
<div style="position:absolute;left:347px;top:226px;width:1px;height:477px;background:#d4d4d4"></div>
<div style="position:absolute;left:411px;top:226px;width:1px;height:477px;background:#d4d4d4"></div>
<div style="position:absolute;left:475px;top:226px;width:1px;height:477px;background:#d4d4d4"></div>
<div style="position:absolute;left:539px;top:226px;width:1px;height:477px;background:#d4d4d4"></div>
<div style="position:absolute;left:603px;top:226px;width:1px;height:477px;background:#d4d4d4"></div>
<div style="position:absolute;left:667px;top:226px;width:1px;height:477px;background:#d4d4d4"></div>
<div style="position:absolute;left:731px;top:226px;width:1px;height:477px;background:#d4d4d4"></div>
<div style="position:absolute;left:795px;top:226px;width:1px;height:477px;background:#d4d4d4"></div>
<div style="position:absolute;left:859px;top:226px;width:1px;height:477px;background:#d4d4d4"></div>
<div style="position:absolute;left:867px;top:225px;width:1px;height:478px;background:#a0a0a0"></div>
<div style="position:absolute;left:867px;top:225px;width:1px;height:1px;background:#9b9b9b"></div>
<div style="position:absolute;left:1px;top:226px;width:25px;height:477px;background:#e6e6e6"></div>
<div style="position:absolute;left:1px;top:266px;width:25px;height:19px;background:#d2d2d2"></div>
<div style="position:absolute;left:26px;top:225px;width:1px;height:478px;background:#9b9b9b"></div>
<div style="position:absolute;left:1px;top:245px;width:25px;height:1px;background:#c6c6c6"></div>
<div class="t" style="left:-186px;width:400px;text-align:center;top:231.29px;font-size:12.3px;line-height:12.3px;color:#222;font-weight:400;">1</div>
<div style="position:absolute;left:1px;top:265px;width:25px;height:1px;background:#c6c6c6"></div>
<div class="t" style="left:-186px;width:400px;text-align:center;top:251.29px;font-size:12.3px;line-height:12.3px;color:#222;font-weight:400;">2</div>
<div style="position:absolute;left:1px;top:285px;width:25px;height:1px;background:#c6c6c6"></div>
<div class="t" style="left:-186px;width:400px;text-align:center;top:271.29px;font-size:12.3px;line-height:12.3px;color:#217346;font-weight:400;">3</div>
<div style="position:absolute;left:1px;top:305px;width:25px;height:1px;background:#c6c6c6"></div>
<div class="t" style="left:-186px;width:400px;text-align:center;top:291.29px;font-size:12.3px;line-height:12.3px;color:#222;font-weight:400;">4</div>
<div style="position:absolute;left:1px;top:325px;width:25px;height:1px;background:#c6c6c6"></div>
<div class="t" style="left:-186px;width:400px;text-align:center;top:311.29px;font-size:12.3px;line-height:12.3px;color:#222;font-weight:400;">5</div>
<div style="position:absolute;left:1px;top:345px;width:25px;height:1px;background:#c6c6c6"></div>
<div class="t" style="left:-186px;width:400px;text-align:center;top:331.29px;font-size:12.3px;line-height:12.3px;color:#222;font-weight:400;">6</div>
<div style="position:absolute;left:1px;top:365px;width:25px;height:1px;background:#c6c6c6"></div>
<div class="t" style="left:-186px;width:400px;text-align:center;top:351.29px;font-size:12.3px;line-height:12.3px;color:#222;font-weight:400;">7</div>
<div style="position:absolute;left:1px;top:385px;width:25px;height:1px;background:#c6c6c6"></div>
<div class="t" style="left:-186px;width:400px;text-align:center;top:371.29px;font-size:12.3px;line-height:12.3px;color:#222;font-weight:400;">8</div>
<div style="position:absolute;left:1px;top:405px;width:25px;height:1px;background:#c6c6c6"></div>
<div class="t" style="left:-186px;width:400px;text-align:center;top:391.29px;font-size:12.3px;line-height:12.3px;color:#222;font-weight:400;">9</div>
<div style="position:absolute;left:1px;top:425px;width:25px;height:1px;background:#c6c6c6"></div>
<div class="t" style="left:-186px;width:400px;text-align:center;top:411.29px;font-size:12.3px;line-height:12.3px;color:#222;font-weight:400;">10</div>
<div style="position:absolute;left:1px;top:445px;width:25px;height:1px;background:#c6c6c6"></div>
<div class="t" style="left:-186px;width:400px;text-align:center;top:431.29px;font-size:12.3px;line-height:12.3px;color:#222;font-weight:400;">11</div>
<div style="position:absolute;left:1px;top:465px;width:25px;height:1px;background:#c6c6c6"></div>
<div class="t" style="left:-186px;width:400px;text-align:center;top:451.29px;font-size:12.3px;line-height:12.3px;color:#222;font-weight:400;">12</div>
<div style="position:absolute;left:1px;top:485px;width:25px;height:1px;background:#c6c6c6"></div>
<div class="t" style="left:-186px;width:400px;text-align:center;top:471.29px;font-size:12.3px;line-height:12.3px;color:#222;font-weight:400;">13</div>
<div style="position:absolute;left:1px;top:505px;width:25px;height:1px;background:#c6c6c6"></div>
<div class="t" style="left:-186px;width:400px;text-align:center;top:491.29px;font-size:12.3px;line-height:12.3px;color:#222;font-weight:400;">14</div>
<div style="position:absolute;left:1px;top:525px;width:25px;height:1px;background:#c6c6c6"></div>
<div class="t" style="left:-186px;width:400px;text-align:center;top:511.29px;font-size:12.3px;line-height:12.3px;color:#222;font-weight:400;">15</div>
<div style="position:absolute;left:1px;top:545px;width:25px;height:1px;background:#c6c6c6"></div>
<div class="t" style="left:-186px;width:400px;text-align:center;top:531.29px;font-size:12.3px;line-height:12.3px;color:#222;font-weight:400;">16</div>
<div style="position:absolute;left:1px;top:565px;width:25px;height:1px;background:#c6c6c6"></div>
<div class="t" style="left:-186px;width:400px;text-align:center;top:551.29px;font-size:12.3px;line-height:12.3px;color:#222;font-weight:400;">17</div>
<div style="position:absolute;left:1px;top:585px;width:25px;height:1px;background:#c6c6c6"></div>
<div class="t" style="left:-186px;width:400px;text-align:center;top:571.29px;font-size:12.3px;line-height:12.3px;color:#222;font-weight:400;">18</div>
<div style="position:absolute;left:1px;top:605px;width:25px;height:1px;background:#c6c6c6"></div>
<div class="t" style="left:-186px;width:400px;text-align:center;top:591.29px;font-size:12.3px;line-height:12.3px;color:#222;font-weight:400;">19</div>
<div style="position:absolute;left:1px;top:625px;width:25px;height:1px;background:#c6c6c6"></div>
<div class="t" style="left:-186px;width:400px;text-align:center;top:611.29px;font-size:12.3px;line-height:12.3px;color:#222;font-weight:400;">20</div>
<div style="position:absolute;left:1px;top:645px;width:25px;height:1px;background:#c6c6c6"></div>
<div class="t" style="left:-186px;width:400px;text-align:center;top:631.29px;font-size:12.3px;line-height:12.3px;color:#222;font-weight:400;">21</div>
<div style="position:absolute;left:1px;top:665px;width:25px;height:1px;background:#c6c6c6"></div>
<div class="t" style="left:-186px;width:400px;text-align:center;top:651.29px;font-size:12.3px;line-height:12.3px;color:#222;font-weight:400;">22</div>
<div style="position:absolute;left:1px;top:685px;width:25px;height:1px;background:#c6c6c6"></div>
<div class="t" style="left:-186px;width:400px;text-align:center;top:671.29px;font-size:12.3px;line-height:12.3px;color:#222;font-weight:400;">23</div>
<div style="position:absolute;left:1px;top:705px;width:25px;height:1px;background:#c6c6c6"></div>
<div class="t" style="left:-186px;width:400px;text-align:center;top:691.29px;font-size:12.3px;line-height:12.3px;color:#222;font-weight:400;">24</div>
<div style="position:absolute;left:25px;top:265px;width:2px;height:21px;background:#217346"></div>
<div class="t" style="left:28.57px;top:231.08px;font-size:12.9px;line-height:12.9px;color:#000;font-weight:400;transform:scaleX(1.0295);transform-origin:0 0;">Название столбца</div>
<div class="t" style="left:152.97px;top:231.08px;font-size:12.9px;line-height:12.9px;color:#000;font-weight:400;transform:scaleX(1.0295);transform-origin:0 0;">Название столбца</div>
<div class="t" style="left:152.93px;top:251.08px;font-size:12.9px;line-height:12.9px;color:#000;font-weight:400;transform:scaleX(1.0655);transform-origin:0 0;">Название ячейки</div>
<div style="position:absolute;left:150px;top:264px;width:135px;height:23px;border:2px solid #217346;box-sizing:border-box"></div>
<div style="position:absolute;left:281px;top:283px;width:5px;height:5px;background:#217346;border:1px solid #fff"></div>
<div style="position:absolute;left:868px;top:196px;width:20px;height:507px;background:#e6e6e6"></div>
<div style="position:absolute;left:871px;top:208px;width:15px;height:15px;background:#fff;border:1px solid #ababab;box-sizing:border-box"></div>
<svg style="position:absolute;left:875px;top:213px;" width="8" height="5" viewBox="0 0 8 5"><path d="M0 4.5L4 0.5 8 4.5z" fill="#606060"/></svg>
<div style="position:absolute;left:871px;top:223px;width:15px;height:445px;background:#fff;border:1px solid #ababab;box-sizing:border-box"></div>
<div style="position:absolute;left:871px;top:668px;width:15px;height:21px;background:#dadada"></div>
<div style="position:absolute;left:871px;top:689px;width:15px;height:15px;background:#fff;border:1px solid #ababab;box-sizing:border-box"></div>
<svg style="position:absolute;left:875px;top:694px;" width="8" height="5" viewBox="0 0 8 5"><path d="M0 0.5h8L4 4.5z" fill="#606060"/></svg>
<div style="position:absolute;left:1px;top:703px;width:887px;height:28px;background:#e6e6e6"></div>
<div style="position:absolute;left:1px;top:703px;width:887px;height:1px;background:#ababab"></div>
<svg style="position:absolute;left:27px;top:712px;" width="6" height="9" viewBox="0 0 6 9"><path d="M5.5 0.5v8L0.5 4.5z" fill="#c4c4c4"/></svg>
<svg style="position:absolute;left:56px;top:712px;" width="6" height="9" viewBox="0 0 6 9"><path d="M0.5 0.5v8L5.5 4.5z" fill="#c4c4c4"/></svg>
<div style="position:absolute;left:101px;top:703px;width:60px;height:25px;background:#fff;border-left:1px solid #ababab;border-right:1px solid #ababab;box-sizing:border-box"></div>
<div style="position:absolute;left:101px;top:726px;width:60px;height:2px;background:#217346"></div>
<div class="t" style="left:113.10px;top:710.37px;font-size:13.5px;line-height:13.5px;color:#217346;font-weight:700;transform:scaleX(0.8523);transform-origin:0 0;">Лист1</div>
<svg style="position:absolute;left:194px;top:709px;" width="16" height="16" viewBox="0 0 16 16"><circle cx="8" cy="8" r="7.2" fill="none" stroke="#666" stroke-width="1.2"/><path d="M8 3.8v8.4M3.8 8h8.4" stroke="#555" stroke-width="1.6"/></svg>
<div style="position:absolute;left:534px;top:712px;width:2px;height:2px;background:#a6a6a6"></div>
<div style="position:absolute;left:534px;top:716px;width:2px;height:2px;background:#a6a6a6"></div>
<div style="position:absolute;left:534px;top:720px;width:2px;height:2px;background:#a6a6a6"></div>
<div style="position:absolute;left:826px;top:710px;width:27px;height:15px;background:#d9d9d9"></div>
<div style="position:absolute;left:566px;top:710px;width:260px;height:15px;background:#fff;border:1px solid #ababab;box-sizing:border-box"></div>
<div style="position:absolute;left:551px;top:710px;width:15px;height:15px;background:#fff;border:1px solid #ababab;box-sizing:border-box"></div>
<svg style="position:absolute;left:555px;top:713px;" width="6" height="9" viewBox="0 0 6 9"><path d="M5 0.5v8L0.5 4.5z" fill="#606060"/></svg>
<div style="position:absolute;left:853px;top:710px;width:15px;height:15px;background:#fff;border:1px solid #ababab;box-sizing:border-box"></div>
<svg style="position:absolute;left:858px;top:713px;" width="6" height="9" viewBox="0 0 6 9"><path d="M0.5 0.5v8L5 4.5z" fill="#606060"/></svg>
<div style="position:absolute;left:1px;top:731px;width:887px;height:22px;background:#f3f2f1"></div>
<div style="position:absolute;left:1px;top:731px;width:887px;height:1px;background:#d2d2d2"></div>
<div class="t" style="left:9.80px;top:736.74px;font-size:10.7px;line-height:10.7px;color:#444;font-weight:400;transform:scaleX(1.0739);transform-origin:0 0;">Готово</div>
<div style="position:absolute;left:575px;top:732px;width:40px;height:21px;background:#d2d2d2"></div>
<svg style="position:absolute;left:0;top:0" width="888" height="754">
<g fill="none" stroke="#4d4d4d" stroke-width="1.3">
<rect x="588.6" y="735.6" width="12.2" height="12"/>
<path d="M592.7 735.6v12M596.7 735.6v12M588.6 739.6h12.2M588.6 743.6h12.2"/>
<rect x="628.6" y="735.6" width="12.6" height="12"/>
</g>
<g fill="none" stroke="#4d4d4d" stroke-width="1.1">
<rect x="631.5" y="737.5" width="7" height="8" stroke-width="1"/>
<path d="M633 739.5h4M633 741.5h4M633 743.5h4" stroke-width="0.9"/>
<path d="M668.6 735.6h12.6v12h-12.6zM668.6 742.6h7.6V735.6M672.9 735.6v7"/>
</g>
</svg>
<div style="position:absolute;left:701px;top:741px;width:8px;height:1.3px;background:#444"></div>
<div style="position:absolute;left:714px;top:741.5px;width:100px;height:1px;background:#b0b0b0"></div>
<div style="position:absolute;left:762px;top:737px;width:5px;height:11px;background:#666"></div>
<div style="position:absolute;left:819px;top:741.3px;width:8px;height:1.1px;background:#555"></div>
<div style="position:absolute;left:822.4px;top:737.6px;width:1.1px;height:8.3px;background:#555"></div>
<div class="t" style="left:840.90px;top:736.66px;font-size:10.8px;line-height:10.8px;color:#444;font-weight:400;transform:scaleX(0.9351);transform-origin:0 0;">100 %</div>
<div style="position:absolute;left:0px;top:33px;width:1px;height:721px;background:#217346"></div>
<div style="position:absolute;left:0px;top:753px;width:888px;height:1px;background:#217346"></div>
<svg style="position:absolute;left:0;top:0" width="888" height="754">
<defs><filter id="sh" x="-10%" y="-10%" width="120%" height="120%"><feGaussianBlur in="SourceAlpha" stdDeviation="3"/><feOffset dx="2" dy="3" result="b"/><feComponentTransfer><feFuncA type="linear" slope="0.5"/></feComponentTransfer><feMerge><feMergeNode/><feMergeNode in="SourceGraphic"/></feMerge></filter></defs>
<rect x="25.2" y="222.3" width="260" height="338" rx="8" ry="8" fill="none" stroke="#ff0000" stroke-width="4.5" filter="url(#sh)"/>
</svg>
</body></html>
